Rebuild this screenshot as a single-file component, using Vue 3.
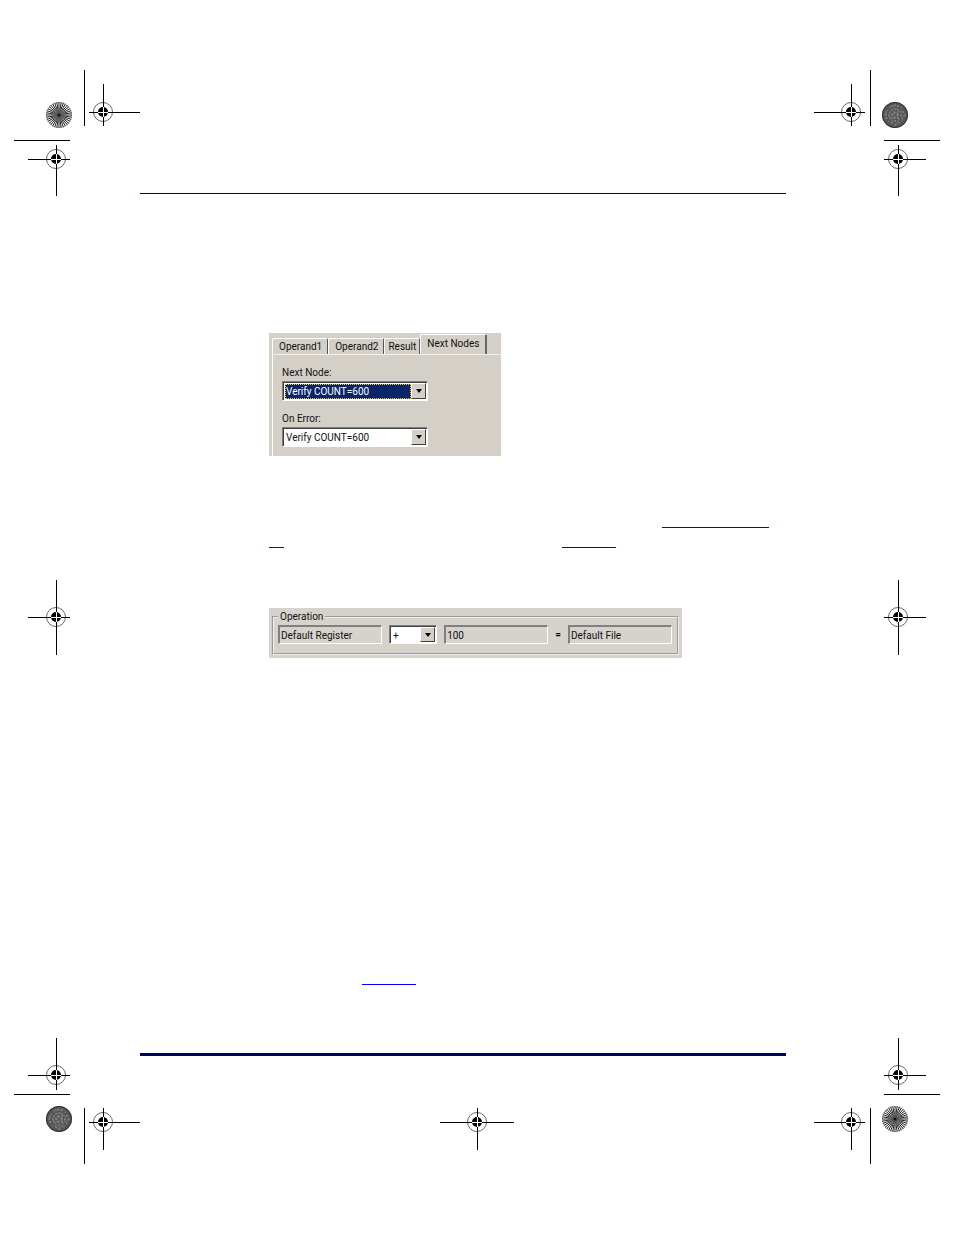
<template>
  <div class="sheet">
    <div v-for="side in sides" :key="side.name" class="side" :class="side.name">
      <svg
        v-for="(block, i) in side.blocks"
        :key="i"
        width="140"
        :height="block.height"
        :viewBox="`0 0 140 ${block.height}`"
        aria-hidden="true"
      >
        <path :d="block.trim" class="hairline" />
        <g v-for="(t, n) in block.targets" :key="n">
          <circle :cx="t.x" :cy="t.y" r="9.5" class="ring" />
          <path :d="cross(t)" class="hairline" />
          <circle :cx="t.x" :cy="t.y" r="5" />
          <path :d="innerCross(t)" class="hairline light" />
        </g>
        <g v-if="block.burst" :transform="`translate(${block.burst.x} ${block.burst.y})`">
          <template v-if="block.burst.dark">
            <circle r="13" fill="#555" />
            <circle v-for="r in [3, 6, 9]" :key="r" :r="r" class="grain" />
            <path d="M0-11V11M-11 0H11M-3-10V10M3-10V10M-10-3H10M-10 3H10" class="grain" />
            <circle r="12.5" fill="none" stroke="#333" />
          </template>
          <template v-else>
            <path :d="rays" class="rays" />
            <circle r="6" fill="#777" opacity=".6" />
            <circle r="12.5" fill="none" stroke="#666" stroke-width=".7" />
            <circle r="1.5" fill="#111" />
          </template>
        </g>
      </svg>
    </div>

    <main class="page">
      <hr class="rule top" />

      <section class="panel nodes">
        <div class="tabs" role="tablist">
          <button
            v-for="tab in tabs"
            :key="tab"
            type="button"
            role="tab"
            class="tab"
            :class="{ active: tab === activeTab }"
            :aria-selected="tab === activeTab"
            @click="activeTab = tab"
          >{{ tab }}</button>
        </div>
        <div class="tab-body">
          <label for="next-node">Next Node:</label>
          <div class="combo focused">
            <select id="next-node"><option>Verify COUNT=600</option></select>
            <span class="arrow"></span>
          </div>
          <label for="on-error">On Error:</label>
          <div class="combo">
            <select id="on-error"><option>Verify COUNT=600</option></select>
            <span class="arrow"></span>
          </div>
        </div>
      </section>

      <div class="lines">
        <div class="line end"><a href="#" class="long" aria-label="Reference"></a></div>
        <div class="line">
          <a href="#" class="tiny" aria-label="Reference"></a>
          <a href="#" class="short" aria-label="Page"></a>
        </div>
      </div>

      <section class="panel operation">
        <fieldset>
          <legend>Operation</legend>
          <div class="fields">
            <input type="text" value="Default Register" aria-label="Operand 1" readonly />
            <div class="combo small">
              <select aria-label="Operator"><option>+</option></select>
              <span class="arrow"></span>
            </div>
            <input type="text" value="100" aria-label="Operand 2" readonly />
            <span class="equals">=</span>
            <input type="text" value="Default File" aria-label="Result" readonly />
          </div>
        </fieldset>
      </section>

      <div class="line single"><a href="#" class="short" aria-label="Page"></a></div>

      <hr class="rule bottom" />
      <svg class="center-mark" width="74" height="42" viewBox="0 0 74 42" aria-hidden="true">
        <circle :cx="center.x" :cy="center.y" r="9.5" class="ring" />
        <path :d="cross(center)" class="hairline" />
        <circle :cx="center.x" :cy="center.y" r="5" />
        <path :d="innerCross(center)" class="hairline light" />
      </svg>
    </main>
  </div>
</template>

<script setup>
import { ref } from 'vue';

const tabs = ['Operand1', 'Operand2', 'Result', 'Next Nodes'];
const activeTab = ref('Next Nodes');

// h and v are the extents of the two cross hairs
const sides = [
  {
    name: 'left',
    blocks: [
      {
        height: 200,
        trim: 'M84.5 70V126M14 140.5H70',
        targets: [
          { x: 103, y: 112, h: [89, 140], v: [84, 126] },
          { x: 56, y: 159, h: [28, 70], v: [145, 196] }
        ],
        burst: { x: 59, y: 115, dark: false }
      },
      { height: 80, trim: '', targets: [{ x: 56, y: 42, h: [28, 70], v: [5, 80] }] },
      {
        height: 205,
        trim: 'M84.5 78V134M14 64.5H70',
        targets: [
          { x: 56, y: 45, h: [28, 70], v: [8, 60] },
          { x: 103, y: 92, h: [89, 140], v: [78, 120] }
        ],
        burst: { x: 59, y: 89, dark: true }
      }
    ]
  },
  {
    name: 'right',
    blocks: [
      {
        height: 200,
        trim: 'M56.5 70V126M70 140.5H126',
        targets: [
          { x: 37, y: 112, h: [0, 51], v: [84, 126] },
          { x: 84, y: 159, h: [70, 112], v: [145, 196] }
        ],
        burst: { x: 81, y: 115, dark: true }
      },
      { height: 80, trim: '', targets: [{ x: 84, y: 42, h: [70, 112], v: [5, 80] }] },
      {
        height: 205,
        trim: 'M56.5 78V134M70 64.5H126',
        targets: [
          { x: 84, y: 45, h: [70, 112], v: [8, 60] },
          { x: 37, y: 92, h: [0, 51], v: [78, 120] }
        ],
        burst: { x: 81, y: 89, dark: false }
      }
    ]
  }
];

const center = { x: 37, y: 14, h: [0, 74], v: [0, 42] };

const cross = (t) =>
  `M${t.h[0]} ${t.y + 0.5}H${t.h[1]}M${t.x + 0.5} ${t.v[0]}V${t.v[1]}`;

const innerCross = (t) =>
  `M${t.x - 5} ${t.y + 0.5}h10M${t.x + 0.5} ${t.y - 5}v10`;

const rays = Array.from({ length: 36 }, (_, i) => {
  const a = (i * Math.PI * 2) / 36;
  return `M0 0L${(Math.cos(a) * 13).toFixed(2)} ${(Math.sin(a) * 13).toFixed(2)}`;
}).join('');
</script>

<style>
body {
  background: #fff;
}
</style>

<style scoped>
.sheet {
  display: grid;
  grid-template-columns: 140px 1fr 140px;
  font-family: Roboto, "Liberation Sans", sans-serif;
  font-size: 10px;
  color: #111;
}

.side {
  grid-row: 1;
  display: flex;
  flex-direction: column;
  justify-content: space-between;
}

.left {
  grid-column: 1;
}

.right {
  grid-column: 3;
}

svg {
  display: block;
}

.hairline {
  fill: none;
  stroke: #000;
  stroke-width: 1;
}

.light {
  stroke: #fff;
}

.ring {
  fill: none;
  stroke: #666;
  stroke-width: 1;
}

.rays {
  stroke: #222;
  stroke-width: 1;
}

.grain {
  fill: none;
  stroke: #8a8a8a;
  stroke-width: 1;
  stroke-dasharray: 2 2;
}

.page {
  grid-column: 2;
  grid-row: 1;
  padding: 193px 0 85px;
}

.rule {
  margin: 0 28px 0 0;
  border: 0;
  background: #006;
}

.rule.top {
  height: 1px;
}

.rule.bottom {
  height: 3px;
}

.panel {
  box-sizing: border-box;
  margin-left: 129px;
  background: #d4d0c8;
}

.nodes {
  width: 232px;
  height: 123px;
  margin-top: 139px;
  padding: 1px 0 0 3px;
}

.tabs {
  display: flex;
  align-items: flex-end;
  height: 20px;
}

.tab {
  box-sizing: border-box;
  height: 16px;
  padding: 0 5px 0 6px;
  border: 1px solid #fff;
  border-right-color: #555;
  border-bottom: 0;
  border-radius: 2px 2px 0 0;
  background: #d4d0c8;
  color: inherit;
  font: inherit;
  line-height: 15px;
  white-space: nowrap;
}

.tab:nth-child(3) {
  padding: 0 3px;
}

.tab.active {
  height: 20px;
  padding: 0 6px 2px;
  border-right: 2px solid #666;
}

.tab-body {
  height: 102px;
  box-sizing: border-box;
  padding: 11px 9px 0;
  border-top: 1px solid #eee;
  border-left: 1px solid #fff;
}

.tab-body label {
  display: block;
  height: 15px;
  line-height: 14px;
}

.combo {
  box-sizing: border-box;
  display: flex;
  width: 146px;
  height: 20px;
  margin-bottom: 11px;
  padding: 1px;
  border: 1px solid #808080;
  border-right-color: #fff;
  border-bottom-color: #fff;
  background: #fff;
  box-shadow: inset 1px 1px #404040;
}

.combo select {
  flex: 1;
  min-width: 0;
  margin: 1px 0 0 1px;
  padding: 0 1px;
  border: 0;
  border-radius: 0;
  appearance: none;
  background: #fff;
  color: inherit;
  font: inherit;
  outline: 0;
}

.combo.focused select {
  outline: 1px dotted #d8c870;
  outline-offset: -1px;
  background: #0a246a;
  color: #fff;
}

.arrow {
  box-sizing: border-box;
  display: grid;
  place-items: center;
  width: 15px;
  border: 1px solid #fff;
  border-right-color: #404040;
  border-bottom-color: #404040;
  background: #d4d0c8;
}

.arrow::before {
  content: "";
  border: 3px solid transparent;
  border-top: 4px solid #000;
  border-bottom: 0;
}

.lines {
  margin: 52px 0 60px 129px;
}

.line {
  display: flex;
  height: 20px;
}

.line a {
  box-sizing: border-box;
  border-bottom: 1px solid #00f;
}

.line.end {
  justify-content: flex-end;
  padding-right: 45px;
}

.long {
  width: 107px;
}

.tiny {
  width: 15px;
}

.short {
  width: 54px;
}

.tiny + .short {
  margin-left: 278px;
}

.operation {
  width: 413px;
  height: 50px;
  padding: 2px 3px 0;
  background: #d6d3cd;
}

fieldset {
  box-sizing: border-box;
  height: 45px;
  min-width: 0;
  margin: 0;
  padding: 2px 5px 0 4px;
  border: 2px groove #eee;
}

legend {
  padding: 0 2px;
  line-height: 13px;
}

.fields {
  display: flex;
  justify-content: space-between;
  align-items: center;
}

.fields input {
  box-sizing: border-box;
  width: 104px;
  height: 19px;
  padding: 0 1px;
  border: 2px solid #808080;
  border-right: 1px solid #fff;
  border-bottom: 1px solid #fff;
  background: #d6d3cd;
  color: inherit;
  font: inherit;
  outline: 0;
}

.combo.small {
  width: 48px;
  height: 19px;
  margin: 0;
}

.equals {
  font-weight: 700;
}

.single {
  margin: 307px 0 68px 222px;
}

.center-mark {
  margin: 52px auto 0;
}
</style>
